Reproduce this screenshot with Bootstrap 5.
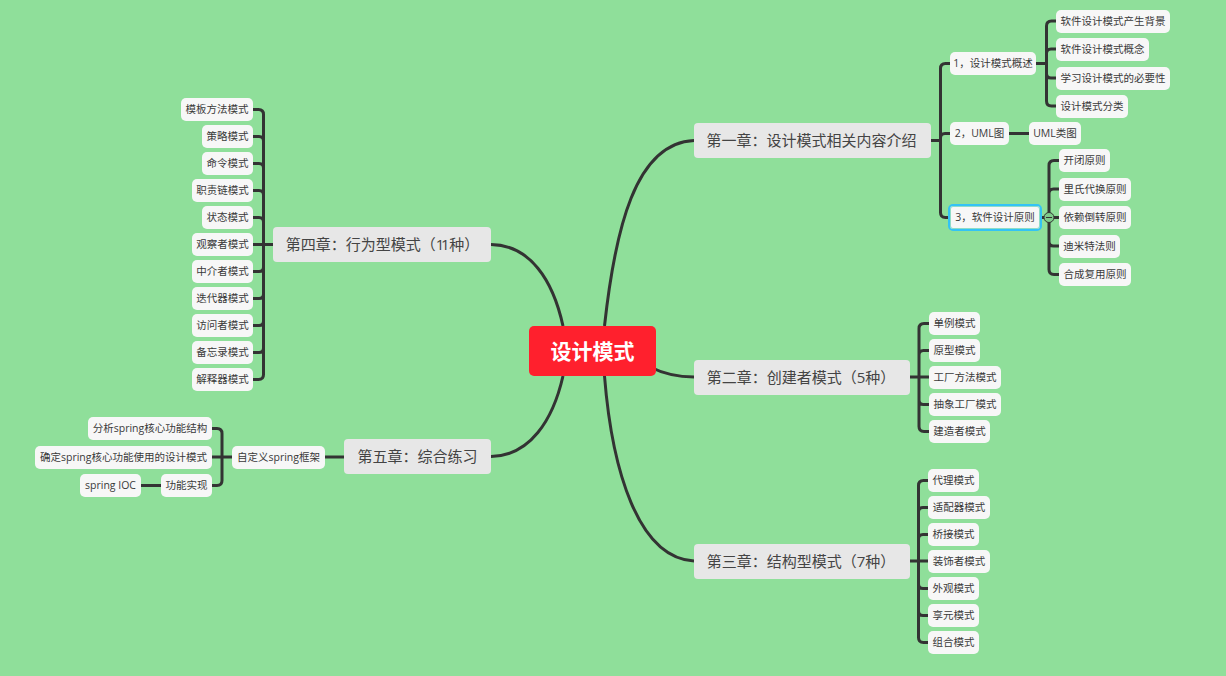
<!DOCTYPE html>
<html lang="zh-CN">
<head>
<meta charset="utf-8">
<title>设计模式</title>
<link href="https://cdn.jsdelivr.net/npm/bootstrap@5.3.0/dist/css/bootstrap.min.css" rel="stylesheet">
<style>
html,body{margin:0;height:100%;background:#8fdf9a}
.mm-canvas{position:relative;width:1226px;height:676px;overflow:hidden;background:#8fdf9a;font-family:"Open Sans","Noto Sans CJK SC",sans-serif;color:#3a3a3a}
.mm-lines{position:absolute;inset:0;width:1226px;height:676px}
.mm-lines path{fill:none;stroke:#333;stroke-width:3}
.mm-lines .mm-toggle{fill:#7ecb8a;stroke:#333;stroke-width:1}
.mm-node{position:absolute;white-space:nowrap;line-height:1}
.mm-leaf{height:23px;background:#f7f7f7;border-radius:5px;font-size:10.5px}
.mm-chap{height:35px;background:#e7e7e7;border-radius:4px;font-size:15px;color:#444}
.mm-root{left:529px;top:326px;width:127px;height:50px;background:#ff202d;border-radius:5px;color:#fff;font-size:21px;font-weight:700}
.mm-sel{left:948px;top:204px;width:94px;height:27px;border:2px solid #33c3f5;border-radius:5px;background:#f7f7f7;font-size:10.5px;box-shadow:inset 0 0 0 1px #8fdcc8}
.mm-tight{letter-spacing:-3.4px;margin-right:3px}
#a1{left:694px;top:123px;width:237px;padding-right:2px}#a2{left:694px;top:360px;width:216px;padding-right:2px}#a3{left:694px;top:544px;width:216px;padding-right:2px}#a4{left:273px;top:227px;width:218px;padding-left:1px}#a5{left:344px;top:439px;width:147px}
#b1{left:950px;top:52px;width:86px}#b2{left:950px;top:122px;width:59px}#b3{left:1029px;top:122px;width:52px}
#c1{left:1056px;top:10px;width:114px}#c2{left:1056px;top:38px;width:93px}#c3{left:1056px;top:67px;width:114px}#c4{left:1056px;top:95px;width:72px}
#d1{left:1059px;top:149px;width:51px}#d2{left:1059px;top:178px;width:72px}#d3{left:1059px;top:206px;width:72px}#d4{left:1059px;top:235px;width:61px}#d5{left:1059px;top:263px;width:72px}
#e1{left:929px;top:312px;width:51px}#e2{left:929px;top:339px;width:51px}#e3{left:929px;top:366px;width:72px}#e4{left:929px;top:393px;width:72px}#e5{left:929px;top:420px;width:61px}
#f1{left:928px;top:469px;width:51px}#f2{left:928px;top:496px;width:62px}#f3{left:928px;top:523px;width:51px}#f4{left:928px;top:550px;width:62px}#f5{left:928px;top:577px;width:51px}#f6{left:928px;top:604px;width:51px}#f7{left:928px;top:631px;width:51px}
#g1{left:181px;top:98px;width:72px}#g2{left:202px;top:125px;width:51px}#g3{left:202px;top:152px;width:51px}#g4{left:192px;top:179px;width:61px}#g5{left:202px;top:206px;width:51px}#g6{left:192px;top:233px;width:61px}#g7{left:192px;top:260px;width:61px}#g8{left:192px;top:287px;width:61px}#g9{left:192px;top:314px;width:61px}#g10{left:192px;top:341px;width:61px}#g11{left:192px;top:368px;width:61px}
#h1{left:232px;top:446px;width:93px}#h2{left:88px;top:417px;width:124px}#h3{left:35px;top:446px;width:177px}#h4{left:161px;top:474px;width:51px}#h5{left:80px;top:474px;width:61px}
</style>
</head>
<body>
<main class="mm-canvas">
<svg class="mm-lines" viewBox="0 0 1226 676" aria-hidden="true">
<path d="M604.5 326C615 230 635 143 694 140.5"/>
<path d="M650 367Q670 377 694 377"/>
<path d="M604.5 376C612 470 638 558 694 561"/>
<path d="M563 326C553 280 530 245 491 244.5"/>
<path d="M563 376C553 420 530 456 491 456.5"/>
<path d="M931 140.5H940.5M950 63.5H945.5Q940.5 63.5 940.5 68.5V212.5Q940.5 217.5 945.5 217.5H950M950 133.5H945Q940.5 133.5 940.5 138"/>
<path d="M1036 63.5H1046.5M1056 21H1051.5Q1046.5 21 1046.5 26V101Q1046.5 106 1051.5 106H1056M1056 49H1051Q1046.5 49 1046.5 53.5M1056 78H1051Q1046.5 78 1046.5 73.5"/>
<path d="M1009 133.5H1029"/>
<path d="M1042 217.5H1059M1059 160.5H1054Q1049 160.5 1049 165.5V269.5Q1049 274.5 1054 274.5H1059M1059 189H1053.5Q1049 189 1049 193.5M1059 246H1053.5Q1049 246 1049 241.5"/>
<path d="M910 377H929M929 323.5H924Q919 323.5 919 328.5V426.5Q919 431.5 924 431.5H929M929 350.5H923.5Q919 350.5 919 355M929 404.5H923.5Q919 404.5 919 400"/>
<path d="M910 561H928M928 480.5H923.5Q918.5 480.5 918.5 485.5V637.5Q918.5 642.5 923.5 642.5H928M928 507.5H923Q918.5 507.5 918.5 512M928 534.5H923Q918.5 534.5 918.5 539M928 588.5H923Q918.5 588.5 918.5 584M928 615.5H923Q918.5 615.5 918.5 611"/>
<path d="M273 244.5H253M253 109.5H258.5Q263.5 109.5 263.5 114.5V374.5Q263.5 379.5 258.5 379.5H253M253 136.5H259Q263.5 136.5 263.5 141M253 163.5H259Q263.5 163.5 263.5 168M253 190.5H259Q263.5 190.5 263.5 195M253 217.5H259Q263.5 217.5 263.5 222M253 271.5H259Q263.5 271.5 263.5 267M253 298.5H259Q263.5 298.5 263.5 294M253 325.5H259Q263.5 325.5 263.5 321M253 352.5H259Q263.5 352.5 263.5 348"/>
<path d="M344 457H325"/>
<path d="M232 457H212M212 428.5H217Q222 428.5 222 433.5V480.5Q222 485.5 217 485.5H212"/>
<path d="M141 485.5H161"/>
<circle class="mm-toggle" cx="1049" cy="217.5" r="5"/>
<rect x="1046" y="217" width="6" height="1" fill="#333"/>
</svg>

<div class="mm-node mm-root d-flex align-items-center justify-content-center">设计模式</div>

<div id="a1" class="mm-node mm-chap d-flex align-items-center justify-content-center">第一章：设计模式相关内容介绍</div>
<div id="a2" class="mm-node mm-chap d-flex align-items-center justify-content-center">第二章：创建者模式（5种）</div>
<div id="a3" class="mm-node mm-chap d-flex align-items-center justify-content-center">第三章：结构型模式（7种）</div>
<div id="a4" class="mm-node mm-chap d-flex align-items-center justify-content-center"><span>第四章：行为型模式（<span class="mm-tight">11</span>种）</span></div>
<div id="a5" class="mm-node mm-chap d-flex align-items-center justify-content-center">第五章：综合练习</div>

<div id="b1" class="mm-node mm-leaf d-flex align-items-center justify-content-center">1，设计模式概述</div>
<div id="b2" class="mm-node mm-leaf d-flex align-items-center justify-content-center">2，UML图</div>
<div id="b3" class="mm-node mm-leaf d-flex align-items-center justify-content-center">UML类图</div>
<div class="mm-node mm-sel d-flex align-items-center justify-content-center">3，软件设计原则</div>

<div id="c1" class="mm-node mm-leaf d-flex align-items-center justify-content-center">软件设计模式产生背景</div>
<div id="c2" class="mm-node mm-leaf d-flex align-items-center justify-content-center">软件设计模式概念</div>
<div id="c3" class="mm-node mm-leaf d-flex align-items-center justify-content-center">学习设计模式的必要性</div>
<div id="c4" class="mm-node mm-leaf d-flex align-items-center justify-content-center">设计模式分类</div>

<div id="d1" class="mm-node mm-leaf d-flex align-items-center justify-content-center">开闭原则</div>
<div id="d2" class="mm-node mm-leaf d-flex align-items-center justify-content-center">里氏代换原则</div>
<div id="d3" class="mm-node mm-leaf d-flex align-items-center justify-content-center">依赖倒转原则</div>
<div id="d4" class="mm-node mm-leaf d-flex align-items-center justify-content-center">迪米特法则</div>
<div id="d5" class="mm-node mm-leaf d-flex align-items-center justify-content-center">合成复用原则</div>

<div id="e1" class="mm-node mm-leaf d-flex align-items-center justify-content-center">单例模式</div>
<div id="e2" class="mm-node mm-leaf d-flex align-items-center justify-content-center">原型模式</div>
<div id="e3" class="mm-node mm-leaf d-flex align-items-center justify-content-center">工厂方法模式</div>
<div id="e4" class="mm-node mm-leaf d-flex align-items-center justify-content-center">抽象工厂模式</div>
<div id="e5" class="mm-node mm-leaf d-flex align-items-center justify-content-center">建造者模式</div>

<div id="f1" class="mm-node mm-leaf d-flex align-items-center justify-content-center">代理模式</div>
<div id="f2" class="mm-node mm-leaf d-flex align-items-center justify-content-center">适配器模式</div>
<div id="f3" class="mm-node mm-leaf d-flex align-items-center justify-content-center">桥接模式</div>
<div id="f4" class="mm-node mm-leaf d-flex align-items-center justify-content-center">装饰者模式</div>
<div id="f5" class="mm-node mm-leaf d-flex align-items-center justify-content-center">外观模式</div>
<div id="f6" class="mm-node mm-leaf d-flex align-items-center justify-content-center">享元模式</div>
<div id="f7" class="mm-node mm-leaf d-flex align-items-center justify-content-center">组合模式</div>

<div id="g1" class="mm-node mm-leaf d-flex align-items-center justify-content-center">模板方法模式</div>
<div id="g2" class="mm-node mm-leaf d-flex align-items-center justify-content-center">策略模式</div>
<div id="g3" class="mm-node mm-leaf d-flex align-items-center justify-content-center">命令模式</div>
<div id="g4" class="mm-node mm-leaf d-flex align-items-center justify-content-center">职责链模式</div>
<div id="g5" class="mm-node mm-leaf d-flex align-items-center justify-content-center">状态模式</div>
<div id="g6" class="mm-node mm-leaf d-flex align-items-center justify-content-center">观察者模式</div>
<div id="g7" class="mm-node mm-leaf d-flex align-items-center justify-content-center">中介者模式</div>
<div id="g8" class="mm-node mm-leaf d-flex align-items-center justify-content-center">迭代器模式</div>
<div id="g9" class="mm-node mm-leaf d-flex align-items-center justify-content-center">访问者模式</div>
<div id="g10" class="mm-node mm-leaf d-flex align-items-center justify-content-center">备忘录模式</div>
<div id="g11" class="mm-node mm-leaf d-flex align-items-center justify-content-center">解释器模式</div>

<div id="h1" class="mm-node mm-leaf d-flex align-items-center justify-content-center">自定义spring框架</div>
<div id="h2" class="mm-node mm-leaf d-flex align-items-center justify-content-center">分析spring核心功能结构</div>
<div id="h3" class="mm-node mm-leaf d-flex align-items-center justify-content-center">确定spring核心功能使用的设计模式</div>
<div id="h4" class="mm-node mm-leaf d-flex align-items-center justify-content-center">功能实现</div>
<div id="h5" class="mm-node mm-leaf d-flex align-items-center justify-content-center">spring IOC</div>
</main>
<script src="https://cdn.jsdelivr.net/npm/bootstrap@5.3.0/dist/js/bootstrap.bundle.min.js"></script>
</body>
</html>
